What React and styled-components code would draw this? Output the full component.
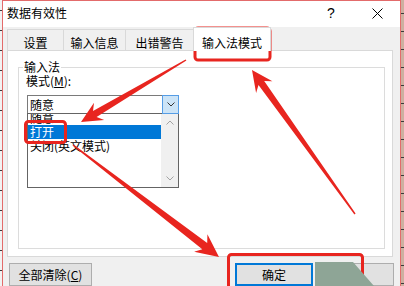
import React from 'react'
import styled, { createGlobalStyle } from 'styled-components'

const GlobalStyle = createGlobalStyle`
  html, body {
    margin: 0;
    padding: 0;
    background: #fff;
  }
  body {
    font-family: "Noto Sans CJK SC", "Noto Sans", sans-serif;
    font-size: 12px;
    color: #000;
  }
  * {
    box-sizing: border-box;
  }
`

const Screen = styled.div`
  position: relative;
  display: flex;
  width: 404px;
  height: 286px;
  overflow: hidden;
`

const Strip = styled.div`
  flex: none;
  width: ${(p) => p.$w}px;
  height: 100%;
  background-color: ${(p) => p.$bg};
  background-image: repeating-linear-gradient(
    to bottom,
    transparent 0 ${(p) => p.$offset}px,
    #3a3a3a ${(p) => p.$offset}px ${(p) => p.$offset + 1}px,
    transparent ${(p) => p.$offset + 1}px ${(p) => p.$period}px
  );
`

const Dialog = styled.div`
  flex: none;
  width: 399px;
  height: 300px;
  display: flex;
  flex-direction: column;
  background: #f0f0f0;
  border: 1px solid #e36b6b;
  border-bottom: none;
`

const TitleBar = styled.div`
  display: flex;
  align-items: center;
  height: 26px;
  padding: 0 0 2px 4px;
  background: #fff;
  .title {
    flex: 1;
    font-size: 12px;
    line-height: 14px;
  }
`

const TitleButton = styled.div`
  width: 46px;
  height: 24px;
  display: flex;
  align-items: center;
  justify-content: center;
  font-family: "Liberation Sans", sans-serif;
  font-size: 14px;
  color: #000;
`

const Body = styled.div`
  flex: 1;
  display: flex;
  flex-direction: column;
  padding: 0 7px 0 4px;
`

const TabRow = styled.div`
  position: relative;
  z-index: 1;
  display: flex;
  align-items: flex-end;
  height: 23px;
`

const Tab = styled.div`
  width: ${(p) => p.$w}px;
  height: ${(p) => (p.$active ? 24 : 21)}px;
  margin-right: -1px;
  margin-bottom: ${(p) => (p.$active ? -1 : 0)}px;
  padding-top: ${(p) => (p.$active ? 8 : 6)}px;
  border: 1px solid #d9d9d9;
  border-bottom: none;
  background: ${(p) => (p.$active ? '#fff' : '#f0f0f0')};
  text-align: center;
  font-size: 12px;
  line-height: 14px;
`

const Panel = styled.div`
  height: 207px;
  display: flex;
  flex-direction: column;
  padding: 9px 7px 7px 10px;
  background: #fff;
  border: 1px solid #d9d9d9;
`

const Group = styled.fieldset`
  flex: 1;
  margin: 0;
  min-width: 0;
  padding: 0 8px 8px 7px;
  border: 1px solid #dcdcdc;
  legend {
    margin-left: -3px;
    padding: 0 1px;
    font-size: 12px;
    line-height: 14px;
  }
`

const Label = styled.div`
  font-size: 12px;
  line-height: 14px;
`

const Combo = styled.div`
  display: flex;
  align-items: stretch;
  width: 152px;
  height: 19px;
  margin: 7px 0 0 1px;
  border: 1px solid #7a7a7a;
  background: #fff;
  .value {
    flex: 1;
    padding-left: 2px;
    line-height: 17px;
  }
`

const DropButton = styled.div`
  width: 17px;
  margin: -1px -1px -1px 0;
  display: flex;
  align-items: center;
  justify-content: center;
  background: #cce4f7;
  border: 1px solid #569de5;
`

const List = styled.div`
  display: flex;
  width: 152px;
  height: 75px;
  margin: -1px 0 0 1px;
  border: 1px solid #646464;
  background: #fff;
`

const Items = styled.div`
  flex: 1;
  overflow: hidden;
  .inner {
    margin-top: -3px;
  }
`

const Item = styled.div`
  height: 14px;
  padding-left: 2px;
  line-height: 14px;
  white-space: nowrap;
  background: ${(p) => (p.$selected ? '#0078d7' : 'transparent')};
  color: ${(p) => (p.$selected ? '#fff' : '#000')};
`

const ScrollBar = styled.div`
  width: 17px;
  display: flex;
  flex-direction: column;
  justify-content: space-between;
  background: #f0f0f0;
`

const ScrollArrow = styled.div`
  height: 17px;
  display: flex;
  align-items: center;
  justify-content: center;
`

const ButtonRow = styled.div`
  display: flex;
  justify-content: space-between;
  margin: 6px -1px 0 0;
  padding-left: 2px;
  .right {
    display: flex;
    gap: 5px;
  }
`

const Button = styled.div`
  width: ${(p) => p.$w}px;
  height: 23px;
  display: flex;
  align-items: center;
  justify-content: center;
  background: #e1e1e1;
  border: ${(p) => (p.$default ? '2px solid #0078d7' : '1px solid #adadad')};
  font-size: 12px;
  line-height: 14px;
`

const Overlay = styled.svg`
  position: absolute;
  left: 0;
  top: 0;
  pointer-events: none;
`

const arrow = (x1, y1, x2, y2, { tail = 1.5, neck = 7, headW = 20, headL = 21 } = {}) => {
  const dx = x2 - x1
  const dy = y2 - y1
  const len = Math.hypot(dx, dy)
  const ux = dx / len
  const uy = dy / len
  const px = -uy
  const py = ux
  const nx = x2 - ux * (headL - 5)
  const ny = y2 - uy * (headL - 5)
  const wx = x2 - ux * headL
  const wy = y2 - uy * headL
  const pt = (x, y) => `${x.toFixed(1)},${y.toFixed(1)}`
  return [
    pt(x1 + (px * tail) / 2, y1 + (py * tail) / 2),
    pt(nx + (px * neck) / 2, ny + (py * neck) / 2),
    pt(wx + (px * headW) / 2, wy + (py * headW) / 2),
    pt(x2, y2),
    pt(wx - (px * headW) / 2, wy - (py * headW) / 2),
    pt(nx - (px * neck) / 2, ny - (py * neck) / 2),
    pt(x1 - (px * tail) / 2, y1 - (py * tail) / 2),
  ].join(' ')
}

const RED = '#e8251f'

const Chevron = ({ up, color }) => (
  <svg width="8" height="5" viewBox="0 0 8 5">
    <path d={up ? 'M0.5 4.5 L4 1 L7.5 4.5' : 'M0.5 0.5 L4 4 L7.5 0.5'} fill="none" stroke={color} strokeWidth="1" />
  </svg>
)

const App = () => {
  return (
    <>
      <GlobalStyle />
      <Screen>
        <Strip $w={2} $bg="#f2f2f2" $offset={10} $period={20} />
        <Dialog>
          <TitleBar>
            <div className="title">数据有效性</div>
            <TitleButton>?</TitleButton>
            <TitleButton>
              <svg width="11" height="11" viewBox="0 0 11 11">
                <path d="M0.5 0.5 L10.5 10.5 M10.5 0.5 L0.5 10.5" stroke="#000" strokeWidth="1" />
              </svg>
            </TitleButton>
          </TitleBar>
          <Body>
            <TabRow>
              <Tab $w={57}>设置</Tab>
              <Tab $w={63}>输入信息</Tab>
              <Tab $w={69}>出错警告</Tab>
              <Tab $w={78} $active>
                输入法模式
              </Tab>
            </TabRow>
            <Panel>
              <Group>
                <legend>输入法</legend>
                <Label>
                  模式(<u>M</u>):
                </Label>
                <Combo>
                  <div className="value">随意</div>
                  <DropButton>
                    <Chevron color="#333" />
                  </DropButton>
                </Combo>
                <List>
                  <Items>
                    <div className="inner">
                      <Item>随意</Item>
                      <Item $selected>打开</Item>
                      <Item>关闭(英文模式)</Item>
                    </div>
                  </Items>
                  <ScrollBar>
                    <ScrollArrow>
                      <Chevron up color="#a3a3a3" />
                    </ScrollArrow>
                    <ScrollArrow>
                      <Chevron color="#a3a3a3" />
                    </ScrollArrow>
                  </ScrollBar>
                </List>
              </Group>
            </Panel>
            <ButtonRow>
              <Button $w={83}>
                全部清除(<u>C</u>)
              </Button>
              <div className="right">
                <Button $w={78} $default>
                  确定
                </Button>
                <Button $w={76} />
              </div>
            </ButtonRow>
          </Body>
        </Dialog>
        <Strip $w={3} $bg="#cdb0a0" $offset={13} $period={18} />
        <Overlay width="404" height="286" viewBox="0 0 404 286">
          <rect x="195" y="28" width="75" height="32" rx="3" fill="none" stroke={RED} strokeWidth="3" />
          <rect x="25.5" y="121.5" width="40" height="21" rx="3" fill="none" stroke={RED} strokeWidth="3" />
          <rect x="228.5" y="254.5" width="134" height="40" rx="3" fill="none" stroke={RED} strokeWidth="3" />
          <polygon points="315,262 353,262 374,286 315,286" fill="#8ea596" />
          <polygon points={arrow(186, 60, 81, 122)} fill={RED} />
          <polygon points={arrow(355, 214, 252, 70)} fill={RED} />
          <polygon points={arrow(73, 145, 219, 257, { neck: 8, headW: 22, headL: 23 })} fill={RED} />
        </Overlay>
      </Screen>
    </>
  )
}

export default App
